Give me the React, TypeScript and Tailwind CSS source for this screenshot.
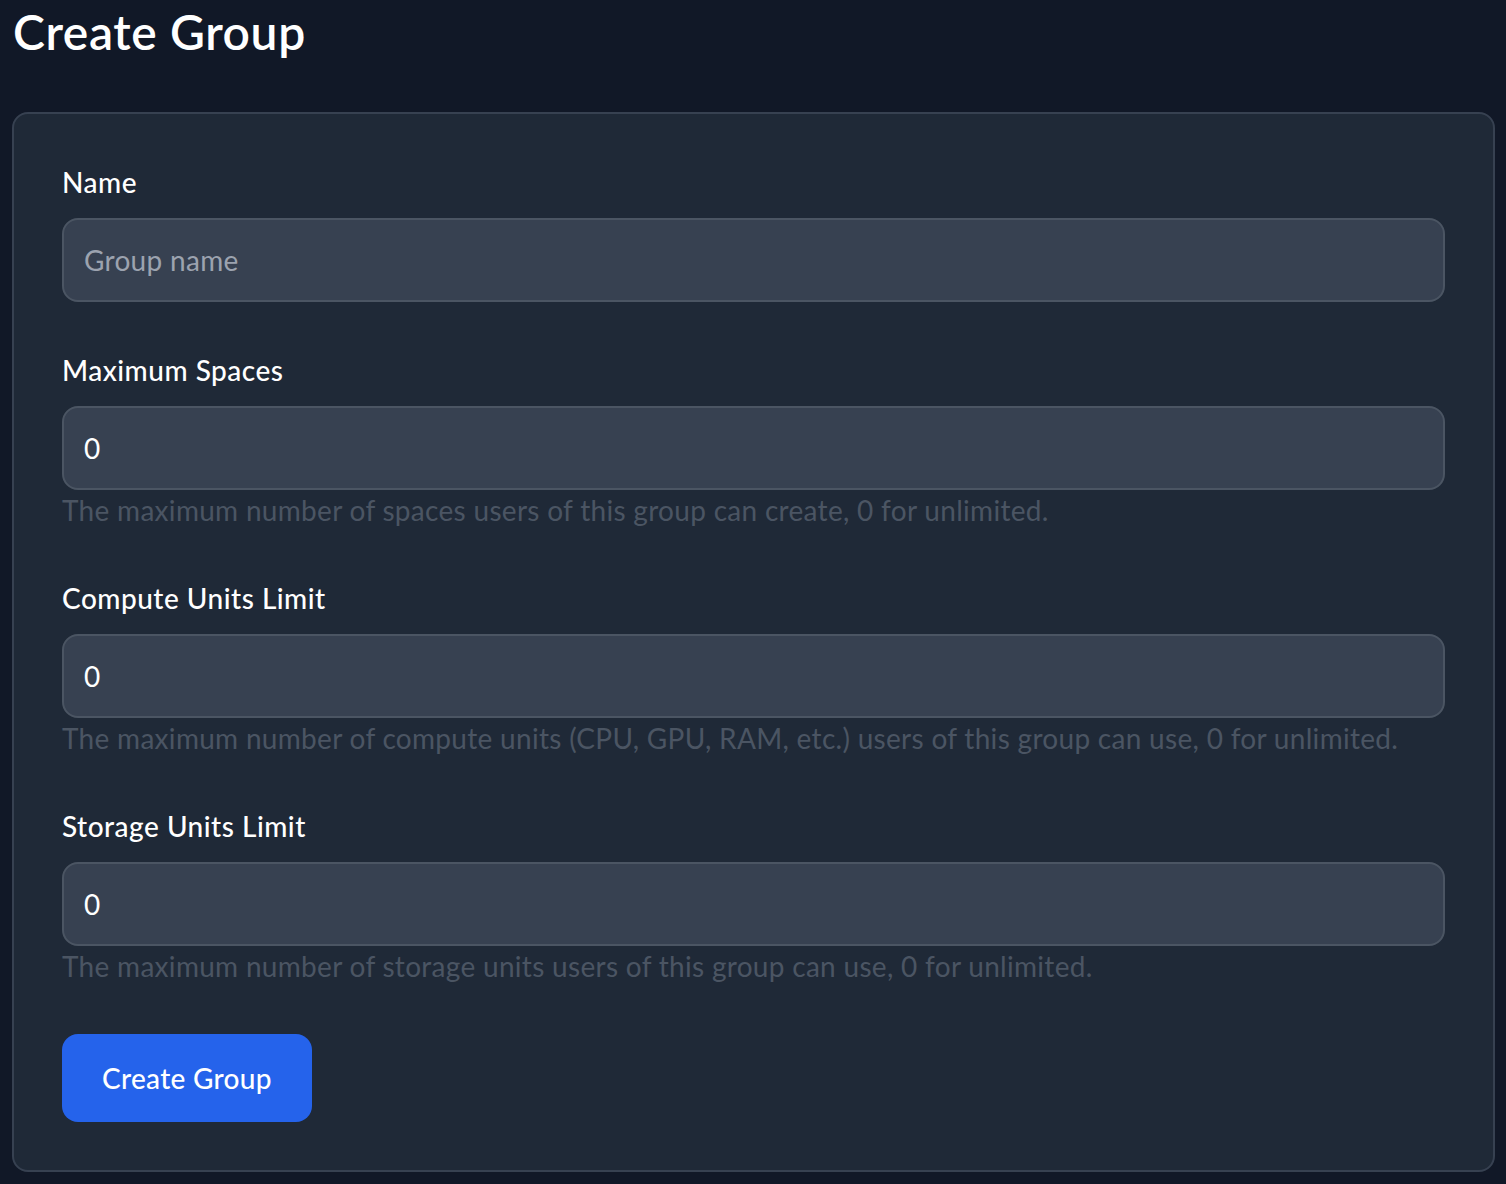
const FONT = "font-['Lato','Noto_Sans',sans-serif]";

type Field = {
  id: string;
  label: string;
  placeholder?: string;
  value?: string;
  help?: string;
};

const FIELDS: Field[] = [
  { id: "name", label: "Name", placeholder: "Group name" },
  {
    id: "spaces",
    label: "Maximum Spaces",
    value: "0",
    help: "The maximum number of spaces users of this group can create, 0 for unlimited.",
  },
  {
    id: "compute",
    label: "Compute Units Limit",
    value: "0",
    help: "The maximum number of compute units (CPU, GPU, RAM, etc.) users of this group can use, 0 for unlimited.",
  },
  {
    id: "storage",
    label: "Storage Units Limit",
    value: "0",
    help: "The maximum number of storage units users of this group can use, 0 for unlimited.",
  },
];

export default function App() {
  return (
    <div className={`min-h-screen bg-[#111827] pl-[12px] pr-[11px] ${FONT}`}>
      <h1 className="text-[48px] leading-[64px] font-semibold tracking-[0.6px] text-white pl-[1px]">
        Create Group
      </h1>

      <div className="mt-[48px] rounded-[16px] border-2 border-[#374151] bg-[#1f2937] p-[48px]">
        <div className="flex flex-col gap-[48px]">
          {FIELDS.map((f) => (
            <div key={f.id}>
              <label
                htmlFor={f.id}
                className="block mb-[16px] text-[28px] leading-[40px] font-medium tracking-[0.5px] text-white"
              >
                {f.label}
              </label>
              <input
                id={f.id}
                type="text"
                placeholder={f.placeholder}
                defaultValue={f.value}
                className="block w-full rounded-[16px] border-2 border-[#4b5563] bg-[#374151] px-[20px] py-[20px] text-[28px] leading-[40px] tracking-[0.3px] text-white placeholder:text-[#9ca3af] outline-none"
              />
              {f.help && (
                <p className="text-[28px] leading-[40px] tracking-[0.3px] text-[#4b5563]">
                  {f.help}
                </p>
              )}
            </div>
          ))}

          <div>
            <button className="rounded-[16px] bg-[#2563eb] px-[40px] py-[24px] text-[28px] leading-[40px] font-medium tracking-[0.3px] text-white">
              Create Group
            </button>
          </div>
        </div>
      </div>
    </div>
  );
}
